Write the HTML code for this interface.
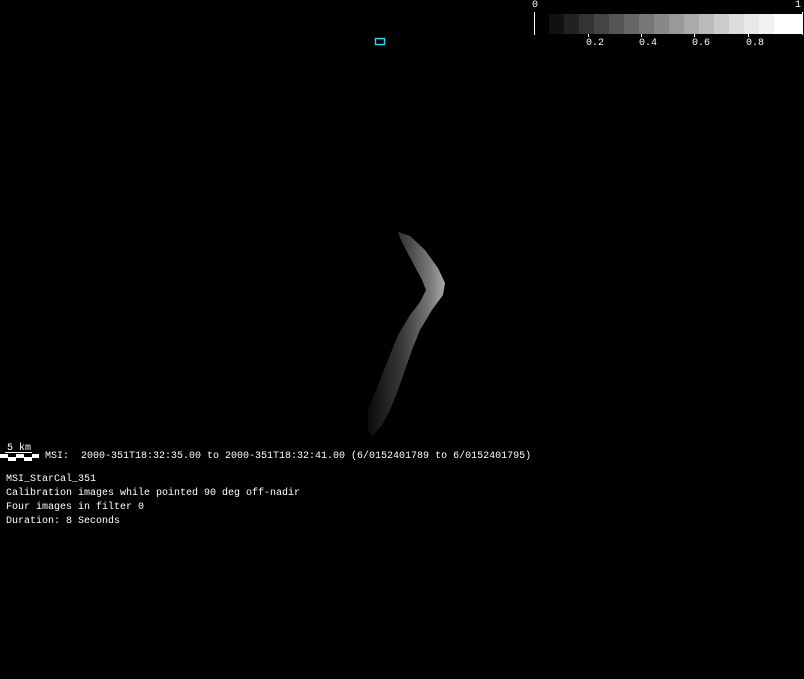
<!DOCTYPE html>
<html><head><style>
body{margin:0;background:#000;width:804px;height:679px;overflow:hidden;position:relative;font-family:"Liberation Mono",monospace;color:#fff}
.t{position:absolute;font-size:10px;line-height:14px;white-space:pre;color:#fff}
</style></head><body>
<svg width="804" height="679" style="position:absolute;left:0;top:0">
<defs>
<linearGradient id="g" x1="0" y1="0" x2="1" y2="0">
<stop offset="0" stop-color="#0a0a0a"/><stop offset="0.45" stop-color="#3a3a3a"/><stop offset="0.8" stop-color="#777"/><stop offset="1" stop-color="#aaa"/>
</linearGradient>
</defs>
<rect x="375.5" y="38.5" width="9" height="6" fill="none" stroke="#2de" stroke-width="1.4"/>
<path d="M398,232 L410,236 L425,250 L438,268 L445,283 L443,295 L432,310 L420,330 L412,350 L405,370 L398,390 L390,410 L382,425 L372,437 L368,430 L368,410 L374,395 L382,375 L390,355 L398,335 L410,315 L420,302 L426,290 L422,280 L414,265 L406,250 L400,238 Z" fill="url(#g)"/>
<g>
<rect x="549" y="14" width="16" height="20" fill="#111"/><rect x="564" y="14" width="16" height="20" fill="#222"/>
<rect x="579" y="14" width="16" height="20" fill="#333"/><rect x="594" y="14" width="16" height="20" fill="#444"/>
<rect x="609" y="14" width="16" height="20" fill="#555"/><rect x="624" y="14" width="16" height="20" fill="#666"/>
<rect x="639" y="14" width="16" height="20" fill="#777"/><rect x="654" y="14" width="16" height="20" fill="#888"/>
<rect x="669" y="14" width="16" height="20" fill="#999"/><rect x="684" y="14" width="16" height="20" fill="#aaa"/>
<rect x="699" y="14" width="16" height="20" fill="#bbb"/><rect x="714" y="14" width="16" height="20" fill="#ccc"/>
<rect x="729" y="14" width="16" height="20" fill="#ddd"/><rect x="744" y="14" width="16" height="20" fill="#e8e8e8"/>
<rect x="759" y="14" width="16" height="20" fill="#f2f2f2"/><rect x="774" y="14" width="29" height="20" fill="#fff"/>
</g>
<g stroke="#fff" stroke-width="1">
<line x1="534.5" y1="12" x2="534.5" y2="35"/><line x1="802.5" y1="12" x2="802.5" y2="35"/>
<line x1="588.5" y1="34" x2="588.5" y2="37"/><line x1="641.5" y1="34" x2="641.5" y2="37"/>
<line x1="694.5" y1="34" x2="694.5" y2="37"/><line x1="748.5" y1="34" x2="748.5" y2="37"/>
<line x1="5" y1="452.5" x2="32" y2="452.5"/>
</g>
<rect x="0" y="454" width="39" height="7" fill="#fff"/>
<rect x="8" y="454" width="8" height="3" fill="#000"/><rect x="24" y="454" width="8" height="3" fill="#000"/>
<rect x="0" y="458" width="8" height="3" fill="#000"/><rect x="16" y="458" width="8" height="3" fill="#000"/><rect x="32" y="458" width="7" height="3" fill="#000"/>
</svg>
<div class="t" style="left:532px;top:-1px">0</div>
<div class="t" style="left:795px;top:-1px">1</div>
<div class="t" style="left:586px;top:37px">0.2</div>
<div class="t" style="left:639px;top:37px">0.4</div>
<div class="t" style="left:692px;top:37px">0.6</div>
<div class="t" style="left:746px;top:37px">0.8</div>
<div class="t" style="left:7px;top:442px">5 km</div>
<div class="t" style="left:45px;top:450px">MSI:  2000-351T18:32:35.00 to 2000-351T18:32:41.00 (6/0152401789 to 6/0152401795)</div>
<div class="t" style="left:6px;top:473px">MSI_StarCal_351
Calibration images while pointed 90 deg off-nadir
Four images in filter 0
Duration: 8 Seconds</div>
</body></html>
